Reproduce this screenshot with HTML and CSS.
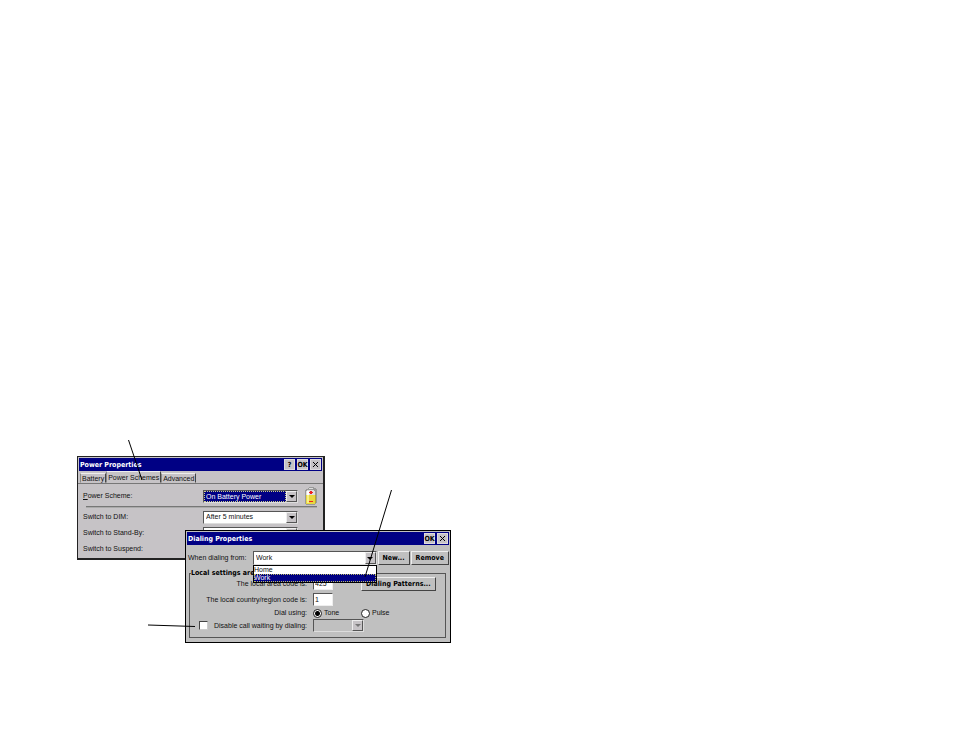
FILE: index.html
```html
<!DOCTYPE html>
<html lang="en">
<head>
  <meta charset="UTF-8">
  <meta name="viewport" content="width=device-width, initial-scale=1.0">
  <title>Power and Dialing Properties</title>
  <link rel="stylesheet" href="styles.css">
</head>
<body>
  <main class="desktop">
    <section class="window power">
      <header class="title-bar">
        <h2>Power Properties</h2>
        <button type="button" aria-label="Help">?</button>
        <button type="button">OK</button>
        <button type="button" aria-label="Close"><svg viewBox="0 0 7 7"><path d="M1 1l5 5M6 1l-5 5"/></svg></button>
      </header>
      <nav class="tabs">
        <button type="button">Battery</button>
        <button type="button" class="active">Power Schemes</button>
        <button type="button">Advanced</button>
      </nav>
      <form class="power-form">
        <div class="row scheme">
          <label for="scheme"><u>P</u>ower Scheme:</label>
          <div class="combo selected">
            <select id="scheme"><option>On Battery Power</option></select>
            <span class="arrow"></span>
          </div>
          <svg class="battery" viewBox="0 0 12 18">
            <path fill="#999" d="M3 1h1V0h5v1h2v1h1v14h-1v1h-1v1H1v-1H0V3h1V2h2z"/>
            <path fill="#ddd" d="M4 1h4v1H4zM2 3h7v1h1v4H1V4h1z"/>
            <path fill="#fff" d="M2 4h2v4H2z"/>
            <path fill="#e8d840" d="M1 8h9v9H1z"/>
            <path fill="#f8f088" d="M2 8h2v8H2z"/>
            <path fill="#b5a632" d="M10 8h1v8h-1z"/>
            <path fill="#f02020" d="M5 4h2v1h1v1H7v1H5V6H4V5h1zM4 14h4v1H4z"/>
          </svg>
        </div>
        <hr>
        <div class="row">
          <label for="dim">Switch to DIM:</label>
          <div class="combo">
            <select id="dim"><option>After 5 minutes</option></select>
            <span class="arrow"></span>
          </div>
        </div>
        <div class="row">
          <label for="standby">Switch to Stand-By:</label>
          <div class="combo">
            <select id="standby"><option>Never</option></select>
            <span class="arrow"></span>
          </div>
        </div>
        <div class="row">
          <label for="suspend">Switch to Suspend:</label>
          <div class="combo">
            <select id="suspend"><option>Never</option></select>
            <span class="arrow"></span>
          </div>
        </div>
      </form>
    </section>

    <section class="window dialing">
      <header class="title-bar">
        <h2>Dialing Properties</h2>
        <button type="button">OK</button>
        <button type="button" aria-label="Close"><svg viewBox="0 0 7 7"><path d="M1 1l5 5M6 1l-5 5"/></svg></button>
      </header>
      <form class="dialing-form">
        <div class="row location">
          <label for="location">When dialing from:</label>
          <div class="combo open">
            <select id="location"><option>Work</option></select>
            <span class="arrow"></span>
            <ul class="list">
              <li>Home</li>
              <li class="current">Work</li>
            </ul>
          </div>
          <button type="button" class="push">New...</button>
          <button type="button" class="push">Remove</button>
        </div>
        <fieldset>
          <legend>Local settings are</legend>
          <div class="settings">
            <label for="area">The local area code is:</label>
            <input type="text" id="area" value="425">
            <button type="button" class="push">Dialing Patterns...</button>

            <label for="country">The local country/region code is:</label>
            <input type="text" id="country" value="1">
            <span></span>

            <span class="caption">Dial using:</span>
            <label class="option"><input type="radio" name="dial" checked>Tone</label>
            <label class="option"><input type="radio" name="dial">Pulse</label>

            <div class="waiting">
              <input type="checkbox" id="waiting">
              <label for="waiting">Disable call waiting by dialing:</label>
            </div>
            <div class="combo disabled">
              <select aria-label="Call waiting code" disabled><option></option></select>
              <span class="arrow"></span>
            </div>
          </div>
        </fieldset>
      </form>
    </section>

    <!-- Callout lines -->
    <svg class="callouts" width="460" height="650">
      <path d="M128.500 440L142 480M391.500 490L365 577M148 625L195 626.500"/>
    </svg>
  </main>
</body>
</html>
```

FILE: styles.css
```css
* {
  box-sizing: border-box;
}

body {
  margin: 0;
  background-color: #fff;
  color: #111;
  font-family: "Liberation Sans", Arial, sans-serif;
  font-size: 7px;
  line-height: 10px;
}

button, input, select {
  margin: 0;
  padding: 0;
  border-radius: 0;
  color: inherit;
  font: inherit;
}

.desktop {
  position: relative;
  min-height: 100vh;
}

/* Windows */
.window {
  position: absolute;
  background-color: #c0c0c0;
}

.power {
  left: 77px;
  top: 456px;
  width: 248px;
  border: 1px solid #222;
  border-right-width: 2px;
  border-bottom-width: 2px;
  background-color: #c6c3c6;
}

.dialing {
  left: 185px;
  top: 530px;
  width: 266px;
  border: 1px solid #000;
}

.title-bar {
  display: flex;
  align-items: center;
  gap: 2px;
  height: 13px;
  margin: 1px 1px 0;
  padding-right: 1px;
  background-color: #000084;
  color: #fff;
}

.title-bar h2 {
  flex: 1;
  margin: 0;
  padding-left: 1px;
  font-family: "DejaVu Sans Condensed", "DejaVu Sans", sans-serif;
  font-size: 7px;
}

.title-bar button {
  display: flex;
  align-items: center;
  justify-content: center;
  width: 11px;
  height: 11px;
  border: 1px solid #dedbde;
  background-color: #c6c3c6;
  color: #000;
  font-family: "DejaVu Sans Condensed", "DejaVu Sans", sans-serif;
  font-weight: bold;
}

.title-bar svg {
  width: 7px;
  height: 7px;
  stroke: #000;
}

/* Tabs */
.tabs {
  display: flex;
  align-items: flex-end;
  height: 13px;
  padding-left: 2px;
  border-bottom: 1px solid #777;
}

.tabs button {
  height: 10px;
  padding: 0 1px;
  border: 1px solid;
  border-color: #eee #444 transparent #888;
  background-color: transparent;
  line-height: 9px;
}

.tabs .active {
  height: 12px;
}

/* Form rows */
.row {
  display: flex;
  align-items: center;
}

.power-form {
  padding: 2px 6px 1px 5px;
}

.power-form .row {
  height: 16px;
}

.power-form label {
  width: 120px;
}

.power-form .combo {
  width: 95px;
}

.power-form .scheme {
  height: 20px;
}

.battery {
  width: 12px;
  height: 18px;
  margin-left: 7px;
}

hr {
  height: 2px;
  margin: 0 0 1px 3px;
  border: 0;
  border-top: 1px solid #777;
  border-bottom: 1px solid #aaa;
}

.combo {
  position: relative;
  display: flex;
  height: 13px;
  border: 1px solid;
  border-color: #555 #ddd #ddd #555;
  background-color: #fff;
}

.combo select {
  flex: 1;
  min-width: 0;
  padding-left: 2px;
  border: 0;
  appearance: none;
  background-color: transparent;
}

.selected select {
  border: 1px dotted #cc8;
  padding-left: 1px;
  background-color: #000084;
  color: #fff;
  line-height: 9px;
}

.arrow {
  display: flex;
  align-items: center;
  justify-content: center;
  width: 11px;
  border: 1px solid;
  border-color: #eee #555 #555 #eee;
  background-color: #c6c3c6;
}

.arrow::after {
  content: "";
  border: solid transparent;
  border-width: 3px 3px 0;
  border-top-color: #000;
}

.push {
  height: 14px;
  padding: 0 4px;
  border: 1px solid;
  border-color: #eee #444 #444 #eee;
  background-color: #c0c0c0;
  color: #000;
  font-family: "DejaVu Sans Condensed", "DejaVu Sans", sans-serif;
  font-weight: bold;
  white-space: nowrap;
}

/* Dialing form */
.dialing-form {
  padding: 6px 1px 4px;
}

.location {
  gap: 1px;
}

.location label {
  width: 65px;
  padding-left: 1px;
  white-space: nowrap;
}

.location .combo {
  flex: 1;
}

.open {
  height: 14px;
}

.list {
  position: absolute;
  top: 13px;
  left: -1px;
  right: -1px;
  margin: 0;
  padding: 0;
  border: 1px solid #000;
  background-color: #fff;
  line-height: 8px;
  list-style: none;
}

.list .current {
  outline: 1px dotted #bb6;
  outline-offset: -1px;
  background-color: #000084;
  color: #fff;
}

fieldset {
  min-width: 0;
  margin: 3px 3px 0 2px;
  padding: 0 5px 4px;
  border: 1px solid #555;
}

legend {
  margin-left: -4px;
  padding: 0;
  color: #000;
  font-family: "DejaVu Sans Condensed", "DejaVu Sans", sans-serif;
  font-weight: bold;
}

.settings {
  display: grid;
  grid-template-columns: 112px 42px 1fr;
  grid-template-rows: 15px 17px 10px 15px;
  column-gap: 6px;
  align-items: center;
  justify-items: start;
  margin-top: -2px;
}

.settings > label:not(.option),
.caption {
  justify-self: end;
  white-space: nowrap;
}

.settings input[type="text"] {
  width: 20px;
  height: 13px;
  padding-left: 1px;
  border: 1px solid;
  border-color: #555 #eee #eee #555;
  background-color: #fff;
}

.option {
  display: flex;
  align-items: center;
  gap: 2px;
}

.option input {
  width: 9px;
  height: 9px;
  border: 1px solid #222;
  border-radius: 50%;
  appearance: none;
  background-color: #fff;
}

.option input:checked {
  background: radial-gradient(circle, #000 2px, #fff 3px);
}

.waiting {
  display: flex;
  align-items: center;
  justify-content: space-between;
  width: 100%;
  padding-left: 4px;
  white-space: nowrap;
}

.waiting input {
  flex-shrink: 0;
  width: 9px;
  height: 9px;
  border: 1px solid;
  border-color: #444 #ccc #ccc #444;
  appearance: none;
  background-color: #fff;
}

.settings .combo {
  width: 51px;
}

.settings .disabled {
  background-color: #c0c0c0;
}

.disabled .arrow::after {
  border-top-color: #777;
}

.callouts {
  position: absolute;
  top: 0;
  left: 0;
  stroke: #000;
  pointer-events: none;
}
```
